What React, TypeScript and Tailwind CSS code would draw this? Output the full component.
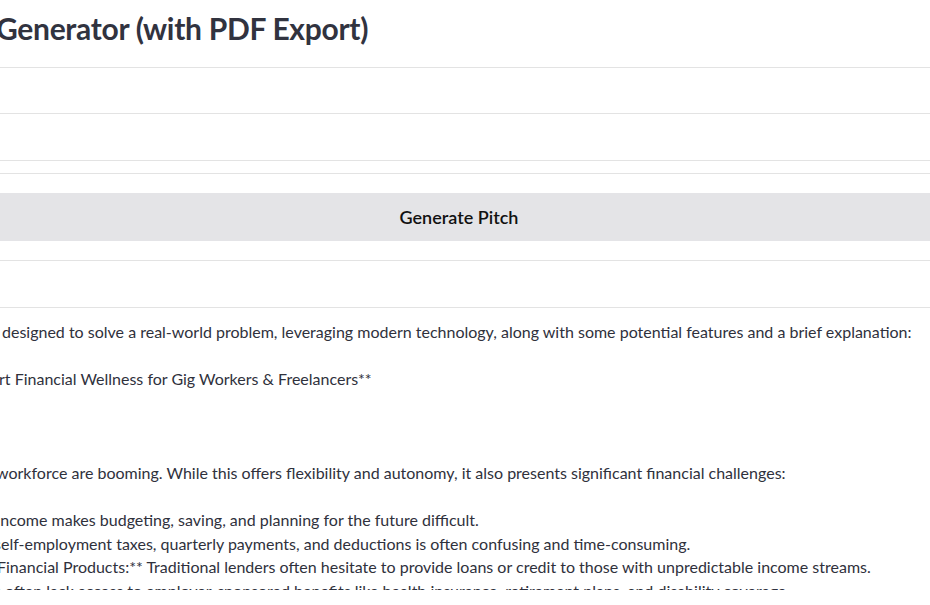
import React from "react";

const Rule = ({ className = "" }: { className?: string }) => (
  <div className={`h-px w-full bg-[#e3e3e3] ${className}`} />
);

const Line = ({ text, shift }: { text: string; shift: string }) => (
  <div className={`whitespace-nowrap h-[23.5px] ${shift}`}>{text}</div>
);

export default function App() {
  return (
    <div
      className="w-[930px] h-[605px] overflow-hidden bg-white text-[#31333f]"
      style={{ fontFamily: '"Source Sans Pro", Lato, "Noto Sans", sans-serif' }}
    >
      <div className="h-[590px] overflow-hidden">
        <div className="h-[67px] pt-[8px]">
          <h1 className="ml-[-4px] whitespace-nowrap text-[30px] font-bold leading-[40px] tracking-[-0.3px] text-[#31333f]">
            Generator (with PDF Export)
          </h1>
        </div>
        <Rule />
        <div className="h-[45px]" />
        <Rule />
        <div className="h-[46px]" />
        <Rule />
        <div className="h-[12px]" />
        <Rule />
        <div className="h-[19px]" />
        <div className="flex h-[48px] w-full items-center justify-center bg-[#e4e4e7]">
          <span className="ml-[-12px] text-[18px] font-semibold text-[#111111]">Generate Pitch</span>
        </div>
        <div className="h-[19px]" />
        <Rule />
        <div className="h-[46px]" />
        <Rule />
        <div className="pt-[12px] text-[16px] leading-[23.5px] text-[#2f313c]">
          <Line shift="ml-[2px]" text="designed to solve a real-world problem, leveraging modern technology, along with some potential features and a brief explanation:" />
          <Line shift="ml-0" text="" />
          <Line shift="ml-[-1px]" text="rt Financial Wellness for Gig Workers & Freelancers**" />
          <Line shift="ml-0" text="" />
          <Line shift="ml-0" text="" />
          <Line shift="ml-0" text="" />
          <Line shift="ml-[-4px]" text="workforce are booming. While this offers flexibility and autonomy, it also presents significant financial challenges:" />
          <Line shift="ml-0" text="" />
          <Line shift="ml-[-4px]" text="Income makes budgeting, saving, and planning for the future difficult." />
          <Line shift="ml-[-6px]" text="self-employment taxes, quarterly payments, and deductions is often confusing and time-consuming." />
          <Line shift="ml-[-3px]" text="Financial Products:** Traditional lenders often hesitate to provide loans or credit to those with unpredictable income streams." />
          <Line shift="ml-[-6px]" text="s often lack access to employer-sponsored benefits like health insurance, retirement plans, and disability coverage." />
        </div>
      </div>
    </div>
  );
}
